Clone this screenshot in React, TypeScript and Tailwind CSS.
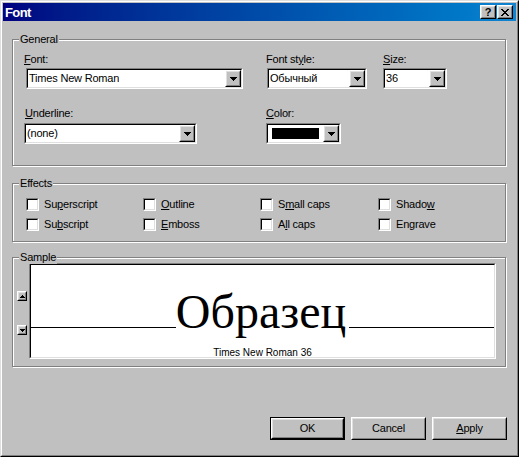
import React from 'react';

const ui = "font-['Liberation_Sans',Arial,sans-serif] text-[11px] leading-[13px] tracking-[-0.2px] text-black";

function U({ children }: { children: React.ReactNode }) {
  return <span className="underline decoration-1 underline-offset-[1px]">{children}</span>;
}

function Raised({ className, children }: { className?: string; children?: React.ReactNode }) {
  return (
    <div className={`border border-white border-r-black border-b-black bg-[#c0c0c0] ${className ?? ''}`}>
      <div className="flex h-full w-full items-center justify-center border border-[#dfdfdf] border-r-[#808080] border-b-[#808080]">
        {children}
      </div>
    </div>
  );
}

function DownArrow() {
  return (
    <svg width="7" height="4" viewBox="0 0 7 4" shapeRendering="crispEdges">
      <path d="M0 0H7V1H6V2H5V3H4V4H3V3H2V2H1V1H0Z" fill="#000" />
    </svg>
  );
}

function SmallArrow({ up }: { up?: boolean }) {
  return (
    <svg width="5" height="3" viewBox="0 0 5 3" shapeRendering="crispEdges">
      {up ? (
        <path d="M2 0H3V1H4V2H5V3H0V2H1V1H2Z" fill="#000" />
      ) : (
        <path d="M0 0H5V1H4V2H3V3H2V2H1V1H0Z" fill="#000" />
      )}
    </svg>
  );
}

const closeRows = ['11000011', '01100110', '00111100', '00011000', '00111100', '01100110', '11000011'];

function CloseGlyph() {
  return (
    <svg width="8" height="7" viewBox="0 0 8 7" shapeRendering="crispEdges">
      {closeRows.map((row, y) =>
        row.split('').map((c, x) => (c === '1' ? <rect key={`${x}-${y}`} x={x} y={y} width="1" height="1" fill="#000" /> : null))
      )}
    </svg>
  );
}

function Sunken({ className, inner, children }: { className?: string; inner?: string; children?: React.ReactNode }) {
  return (
    <div className={`border border-[#808080] border-r-white border-b-white ${className ?? ''}`}>
      <div className={`h-full w-full border border-black border-r-[#dfdfdf] border-b-[#dfdfdf] bg-white ${inner ?? ''}`}>
        {children}
      </div>
    </div>
  );
}

function Combo({ width, text, swatch }: { width: string; text?: string; swatch?: boolean }) {
  return (
    <Sunken className={`h-[21px] ${width}`} inner="flex items-center">
      <div className="flex min-w-0 flex-1 items-center pl-[1px]">
        {swatch ? <div className="ml-[3px] h-[11px] w-[47px] bg-black" /> : <span className="truncate">{text}</span>}
      </div>
      <Raised className="h-full w-[16px]">
        <DownArrow />
      </Raised>
    </Sunken>
  );
}

function Group({ title, className, children }: { title: string; className?: string; children?: React.ReactNode }) {
  return (
    <div
      className={`relative border border-[#808080] shadow-[inset_1px_1px_0_#fff,1px_1px_0_#fff] ${className ?? ''}`}
    >
      <span className="absolute -top-[7px] left-[6px] bg-[#c0c0c0] px-[1px]">{title}</span>
      {children}
    </div>
  );
}

function Check({ children }: { children: React.ReactNode }) {
  return (
    <div className="flex h-[13px] items-center gap-[5px]">
      <Sunken className="h-[13px] w-[13px] shrink-0" />
      <span>{children}</span>
    </div>
  );
}

function Button({ children, isDefault }: { children: React.ReactNode; isDefault?: boolean }) {
  if (isDefault) {
    return (
      <div className="h-[23px] w-[75px] border border-black">
        <Raised className="h-full w-full">{children}</Raised>
      </div>
    );
  }
  return <Raised className="h-[23px] w-[75px]">{children}</Raised>;
}

export default function App() {
  return (
    <div className={`${ui} h-[457px] w-[519px] border border-[#dfdfdf] border-r-black border-b-black bg-[#c0c0c0]`}>
      <div className="flex h-full flex-col border border-white border-r-[#808080] border-b-[#808080] p-[1px]">
        {/* title bar */}
        <div className="flex h-[18px] shrink-0 items-center bg-linear-to-r from-[#000080] to-[#1084d0] pl-[2px] pr-[3px]">
          <span className="flex-1 text-[13px] font-bold tracking-[-0.6px] text-white">Font</span>
          <Raised className="h-[14px] w-[16px]">
            <span className="text-[11px] font-bold leading-none">?</span>
          </Raised>
          <Raised className="ml-[1px] h-[14px] w-[16px]">
            <CloseGlyph />
          </Raised>
        </div>

        {/* client */}
        <div className="flex flex-1 flex-col pl-[9px] pr-[10px]">
          <Group title="General" className="mt-[18px] h-[127px] pl-[11px] pt-[13px]">
            <div className="flex">
              <div className="w-[242px]">
                <div>
                  <U>F</U>ont:
                </div>
                <Combo width="ml-[2px] mt-[2px] w-[217px]" text="Times New Roman" />
              </div>
              <div className="w-[116px]">
                <div>
                  Font st<U>y</U>le:
                </div>
                <Combo width="ml-[1px] mt-[2px] w-[100px]" text="Обычный" />
              </div>
              <div>
                <div className="ml-[1px]">
                  <U>S</U>ize:
                </div>
                <Combo width="ml-[1px] mt-[2px] w-[64px]" text="36" />
              </div>
            </div>
            <div className="mt-[18px] flex">
              <div className="w-[242px]">
                <div className="ml-[1px]">
                  <U>U</U>nderline:
                </div>
                <Combo width="mt-[3px] w-[173px]" text="(none)" />
              </div>
              <div>
                <div>
                  <U>C</U>olor:
                </div>
                <Combo width="mt-[3px] w-[75px]" swatch />
              </div>
            </div>
          </Group>

          <Group title="Effects" className="mt-[17px] h-[59px] pl-[13px] pt-[14px]">
            <div className="grid grid-cols-[117px_117px_118px_117px] gap-y-[7px]">
              <Check>
                Su<U>p</U>erscript
              </Check>
              <Check>
                <U>O</U>utline
              </Check>
              <Check>
                S<U>m</U>all caps
              </Check>
              <Check>
                Shado<U>w</U>
              </Check>
              <Check>
                Su<U>b</U>script
              </Check>
              <Check>
                <U>E</U>mboss
              </Check>
              <Check>
                A<U>l</U>l caps
              </Check>
              <Check>Engrave</Check>
            </div>
          </Group>

          <Group title="Sample" className="mt-[15px] h-[110px] pt-[5px]">
            <div className="flex">
              <div className="ml-[4px] flex w-[10px] flex-col pt-[28px]">
                <Raised className="h-[10px] w-[10px]">
                  <SmallArrow up />
                </Raised>
                <Raised className="mt-[24px] h-[10px] w-[10px]">
                  <SmallArrow />
                </Raised>
              </div>
              <Sunken className="ml-[2px] h-[96px] w-[467px]" inner="flex flex-col overflow-hidden pt-[23px]">
                <div className="flex items-baseline">
                  <div className="h-px flex-1 bg-black" />
                  <span className="font-['Liberation_Serif','Times_New_Roman',serif] text-[48px] leading-[48px] tracking-normal">
                    Образец
                  </span>
                  <div className="ml-[3px] h-px flex-1 bg-black" />
                </div>
                <div className="mt-[12px] text-center text-[10px] leading-[10px] tracking-normal">Times New Roman 36</div>
              </Sunken>
            </div>
          </Group>

          <div className="-mr-px mt-[50px] flex justify-end gap-[6px]">
            <Button isDefault>OK</Button>
            <Button>Cancel</Button>
            <Button>
              <span>
                <U>A</U>pply
              </span>
            </Button>
          </div>
        </div>
      </div>
    </div>
  );
}
